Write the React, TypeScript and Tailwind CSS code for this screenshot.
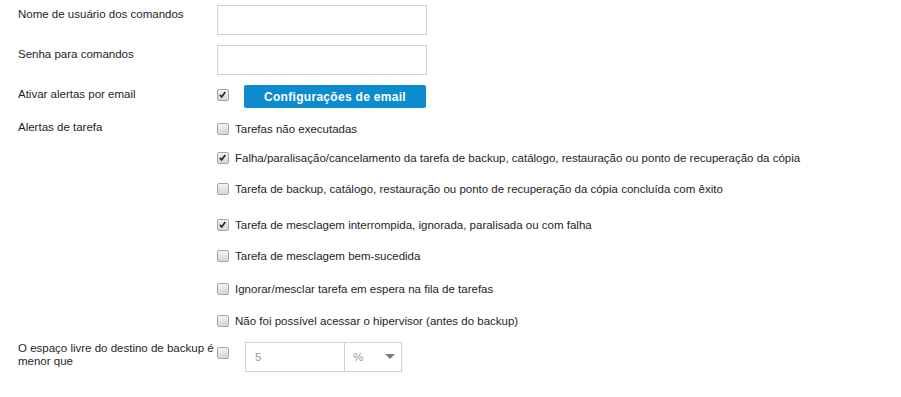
import React from "react";

function Box({ checked }: { checked?: boolean }) {
  return (
    <span className="relative inline-block w-[12px] h-[12px] shrink-0 rounded-[2px] border border-[#a4a4a4] bg-gradient-to-b from-[#f3f3f3] to-[#d6d6d6]">
      {checked && (
        <svg viewBox="0 0 12 12" className="absolute left-[0px] top-[0px] w-[10px] h-[10px]">
          <path d="M2.2 5.8 L4.4 8.2 L8.8 2.4" fill="none" stroke="#2b2b2b" strokeWidth="2" />
        </svg>
      )}
    </span>
  );
}

const items: { t: string; c: boolean; mt: string }[] = [
  { t: "Tarefas não executadas", c: false, mt: "mt-[2px]" },
  { t: "Falha/paralisação/cancelamento da tarefa de backup, catálogo, restauração ou ponto de recuperação da cópia", c: true, mt: "mt-[15px]" },
  { t: "Tarefa de backup, catálogo, restauração ou ponto de recuperação da cópia concluída com êxito", c: false, mt: "mt-[17px]" },
  { t: "Tarefa de mesclagem interrompida, ignorada, paralisada ou com falha", c: true, mt: "mt-[22px]" },
  { t: "Tarefa de mesclagem bem-sucedida", c: false, mt: "mt-[17px]" },
  { t: "Ignorar/mesclar tarefa em espera na fila de tarefas", c: false, mt: "mt-[19px]" },
  { t: "Não foi possível acessar o hipervisor (antes do backup)", c: false, mt: "mt-[18px]" },
];

export default function App() {
  return (
    <div className="w-[901px] h-[397px] bg-white pt-[5px] pl-[18px] text-[11.5px] leading-[14px] text-[#1e1e1e]" style={{ fontFamily: '"Liberation Sans", Arial, sans-serif' }}>
      <div className="flex">
        <div className="w-[199px] pt-[2px]">Nome de usuário dos comandos</div>
        <input className="w-[210px] h-[30px] border border-[#d2d2d2] outline-none" />
      </div>
      <div className="flex mt-[10px]">
        <div className="w-[199px] pt-[2px]">Senha para comandos</div>
        <input type="password" className="w-[210px] h-[30px] border border-[#d2d2d2] outline-none" />
      </div>
      <div className="flex mt-[10px]">
        <div className="w-[199px] pt-[2px]">Ativar alertas por email</div>
        <div className="mt-[4px]"><Box checked /></div>
        <button className="ml-[15px] w-[182px] h-[23px] rounded-[2px] bg-[#0c8bce] text-white font-bold text-[12px] tracking-[0.3px]">
          Configurações de email
        </button>
      </div>
      <div className="flex mt-[12px]">
        <div className="w-[199px]">Alertas de tarefa</div>
        <div className="flex flex-col">
          {items.map((it, i) => (
            <div key={i} className={"flex items-center h-[14px] " + it.mt}>
              <Box checked={it.c} />
              <span className="ml-[6px] whitespace-nowrap">{it.t}</span>
            </div>
          ))}
        </div>
      </div>
      <div className="flex mt-[14px]">
        <div className="w-[199px] leading-[13px]">O espaço livre do destino de backup é menor que</div>
        <div className="mt-[5px]"><Box /></div>
        <div className="flex ml-[16px]">
          <div className="w-[100px] h-[30px] border border-[#d2d2d2] pl-[9px] flex items-center text-[#9a9a9a]">5</div>
          <div className="w-[57px] h-[30px] border border-l-0 border-[#d2d2d2] flex items-center justify-between pl-[8px] pr-[6px] text-[#9a9a9a]">
            <span>%</span>
            <svg width="10" height="6" viewBox="0 0 10 6"><path d="M0 0 L10 0 L5 5 Z" fill="#7a7a7a" /></svg>
          </div>
        </div>
      </div>
    </div>
  );
}
